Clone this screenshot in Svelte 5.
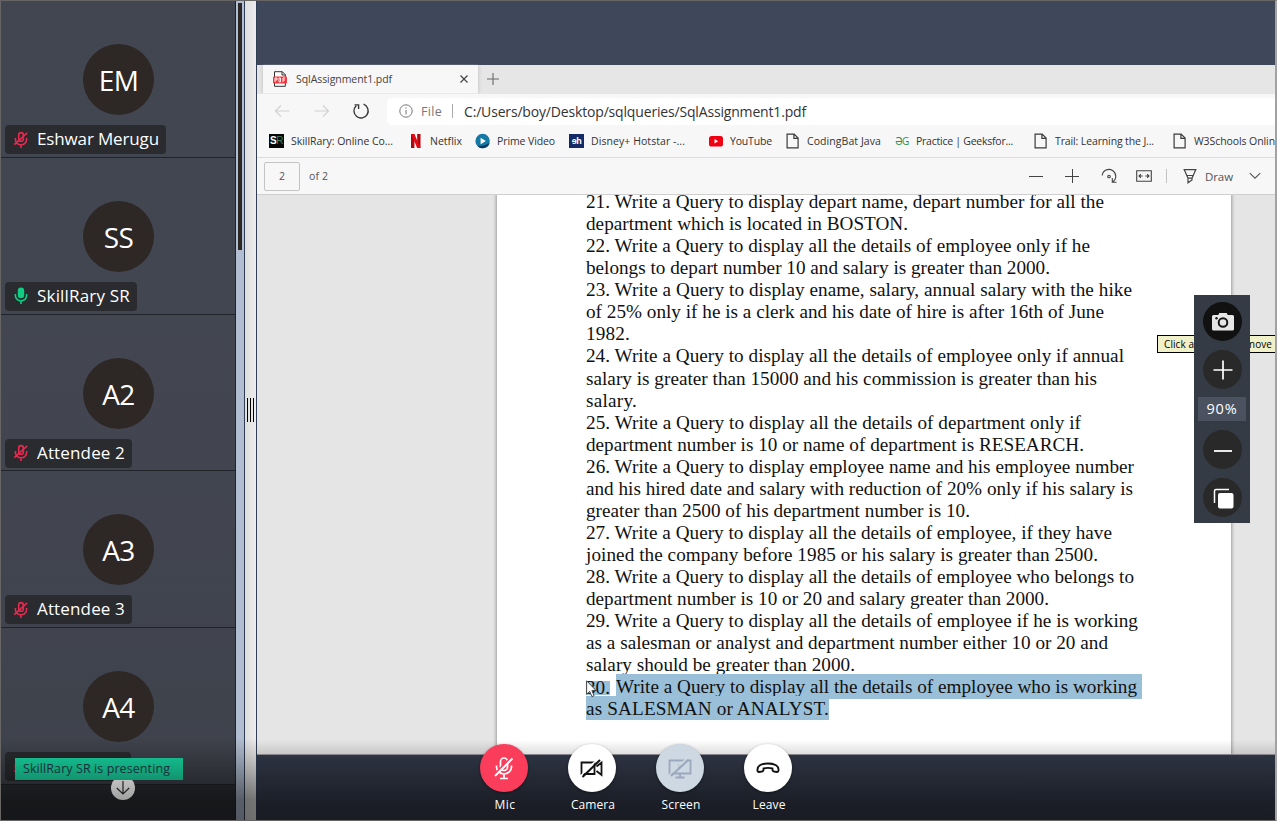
<script>
  // Spreads letter spacing so a run of text fills the given width.
  function fit(node, width) {
    const natural = node.getBoundingClientRect().width;
    node.style.letterSpacing = (width - natural) / node.textContent.length + 'px';
  }

  const people = [
    { initials: 'EM', name: 'Eshwar Merugu', width: 122, muted: true },
    { initials: 'SS', name: 'SkillRary SR', width: 93, muted: false },
    { initials: 'A2', name: 'Attendee 2', width: 88, muted: true },
    { initials: 'A3', name: 'Attendee 3', width: 88, muted: true },
    { initials: 'A4', name: '', width: 88, muted: true },
  ];

  const bookmarks = [
    { icon: 'sr', text: 'SkillRary: Online Co...', width: 102 },
    { icon: 'netflix', text: 'Netflix', width: 32 },
    { icon: 'prime', text: 'Prime Video', width: 58 },
    { icon: 'hotstar', text: 'Disney+ Hotstar -...', width: 94 },
    { icon: 'youtube', text: 'YouTube', width: 42 },
    { icon: 'page', text: 'CodingBat Java', width: 74 },
    { icon: 'gfg', text: 'Practice | Geeksfor...', width: 97 },
    { icon: 'page', text: 'Trail: Learning the J...', width: 99 },
    { icon: 'page', text: 'W3Schools Onlin', width: 81 },
  ];

  const lines = [
    ['21. Write a Query to display depart name, depart number for all the', 518],
    ['department which is located in BOSTON.', 322],
    ['22. Write a Query to display all the details of employee only if he', 504],
    ['belongs to depart number 10 and salary is greater than 2000.', 464],
    ['23. Write a Query to display ename, salary, annual salary with the hike', 546],
    ['of 25% only if he is a clerk and his date of hire is after 16th of June', 518],
    ['1982.', 44],
    ['24. Write a Query to display all the details of employee only if annual', 538],
    ['salary is greater than 15000 and his commission is greater than his', 511],
    ['salary.', 51],
    ['25. Write a Query to display all the details of department only if', 495],
    ['department number is 10 or name of department is RESEARCH.', 498],
    ['26. Write a Query to display employee name and his employee number', 548],
    ['and his hired date and salary with reduction of 20% only if his salary is', 547],
    ['greater than 2500 of his department number is 10.', 384],
    ['27. Write a Query to display all the details of employee, if they have', 526],
    ['joined the company before 1985 or his salary is greater than 2500.', 512],
    ['28. Write a Query to display all the details of employee who belongs to', 548],
    ['department number is 10 or 20 and salary greater than 2000.', 463],
    ['29. Write a Query to display all the details of employee if he is working', 552],
    ['as a salesman or analyst and department number either 10 or 20 and', 522],
    ['salary should be greater than 2000.', 269],
  ];
</script>

{#snippet smallMic(muted)}
  <svg class="smic" width="16" height="18" viewBox="0 0 16 18" fill="none" stroke={muted ? '#e8294f' : '#0fce83'} stroke-width="1.6">
    {#if muted}
      <rect x="5.7" y="1.6" width="4.6" height="8.6" rx="2.3" />
      <path d="M2.4 7v1.8a5.6 5 0 0 0 11.2 0V7M8 14v3M1.2 13.6 14.2 1.8" />
    {:else}
      <rect x="5.6" y="1.4" width="4.8" height="9" rx="2.4" fill="#0fce83" />
      <path d="M2.4 7v1.8a5.6 5 0 0 0 11.2 0V7M8 14v3" />
    {/if}
  </svg>
{/snippet}

{#snippet bookmarkIcon(kind)}
  {#if kind === 'sr'}
    <span class="tile-icon sr"><b>S</b>R</span>
  {:else if kind === 'netflix'}
    <svg width="16" height="16" viewBox="0 0 16 16"><path d="M3 1h3.4v14H3zM9.2 1h3.3v14H9.2z" fill="#b1060f" /><path d="M3 1h3.4l6.1 14H9.2z" fill="#e50914" /></svg>
  {:else if kind === 'prime'}
    <svg width="16" height="16" viewBox="0 0 16 16"><circle cx="7.6" cy="8" r="7.2" fill="#1579a5" /><path d="M2 12.5A7.2 7.2 0 0 0 14.6 10Q8 14 2 12.5Z" fill="#0a3c62" /><path d="M5.6 4.8 10.8 8l-5.2 3.2z" fill="#fff" /></svg>
  {:else if kind === 'hotstar'}
    <span class="tile-icon hot">ɘh</span>
  {:else if kind === 'youtube'}
    <svg width="16" height="16" viewBox="0 0 16 16"><rect x="1" y="3" width="14" height="10.5" rx="2.6" fill="#f00010" /><path d="M6.5 6 10.2 8.2 6.5 10.4z" fill="#fff" /></svg>
  {:else if kind === 'gfg'}
    <span class="gfg">ƏG</span>
  {:else}
    <svg width="16" height="16" viewBox="0 0 16 16" fill="none" stroke="#3b3b3b" stroke-width="1.2"><path d="M2.1 1.1h7l4 4v9.8h-11zM8.900 1.1v4.200h4.200" /></svg>
  {/if}
{/snippet}

<div class="app">
  <aside>
    <div class="people">
      {#each people as p}
        <section class="person">
          <div class="avatar">{p.initials}</div>
          <div class="label">{@render smallMic(p.muted)}{#if p.name}<span use:fit={p.width}>{p.name}</span>{:else}<span class="blank"></span>{/if}</div>
        </section>
      {/each}
      <div class="rest"></div>
    </div>
    <div class="track"><div class="thumb"></div></div>
    <div class="splitter"><i></i><i></i><i></i></div>
    <div class="shade"></div>
    <div class="down">
      <svg width="24" height="24" viewBox="0 0 24 24" fill="none" stroke="#202020" stroke-width="1.2"><path d="M12 5v13M5.800 12l6.200 6 6.200-6" /></svg>
    </div>
    <div class="presenting"><span use:fit={147}>SkillRary SR is presenting</span></div>
  </aside>

  <main>
    <div class="stage"></div>
    <div class="tabs">
      <div class="tab">
        <svg width="14" height="16" viewBox="0 0 14 16"><path d="M1.500.7h7.800l3 3v11.600H1.500z" fill="#fff" stroke="#333" /><path d="M9 .7v3.300h3.300" fill="none" stroke="#333" /><rect x="0" y="5.500" width="14" height="7" rx="1" fill="#f0383e" /><path d="M2 11V7h2v2H2M6 7v4h1.500V7zM10 11V7h2.300M10 9h2" fill="none" stroke="#fff" stroke-width=".9" /></svg>
        <span class="title"><span use:fit={96}>SqlAssignment1.pdf</span></span>
        <svg width="10" height="10" viewBox="0 0 10 10" stroke="#444" stroke-width="1.2"><path d="m1.500 1.500 7 7m0-7-7 7" /></svg>
      </div>
      <svg class="newtab" width="12" height="12" viewBox="0 0 12 12" stroke="#666" stroke-width="1.1"><path d="M6 0v12M0 6h12" /></svg>
    </div>
    <div class="address">
      <svg class="back" width="16" height="14" viewBox="0 0 16 14" fill="none" stroke="#d2d2d2" stroke-width="1.2"><path d="M15.500 7H1.500M7 1.500 1.500 7 7 12.500" /></svg>
      <svg class="fwd" width="16" height="14" viewBox="0 0 16 14" fill="none" stroke="#d2d2d2" stroke-width="1.2"><path d="M.5 7h14M9 1.500 14.500 7 9 12.500" /></svg>
      <svg class="reload" width="18" height="18" viewBox="0 0 18 18" fill="none" stroke="#3a3a3a" stroke-width="1.4"><path d="M11.500 2.200A7.100 7.100 0 1 1 4.200 3.700M2.600 2.900h4v4" /></svg>
      <div class="url">
        <svg width="14" height="14" viewBox="0 0 14 14" fill="none" stroke="#777"><circle cx="7" cy="7" r="6.200" /><path d="M7 6v4.500M7 3.400v1.300" /></svg>
        <span class="file"><span use:fit={21}>File</span></span>
        <i></i>
        <span class="path" use:fit={342}>C:/Users/boy/Desktop/sqlqueries/SqlAssignment1.pdf</span>
      </div>
    </div>
    <div class="bookmarks">
      {#each bookmarks as b}
        <div class="bm">{@render bookmarkIcon(b.icon)}<span use:fit={b.width}>{b.text}</span></div>
      {/each}
    </div>
    <div class="tools">
      <div class="num">2</div>
      <span class="of"><span use:fit={19}>of 2</span></span>
      <div class="right">
        <svg width="14" height="14" viewBox="0 0 14 14" stroke="#444" stroke-width="1"><path d="M0 7.500h14" /></svg>
        <svg width="14" height="14" viewBox="0 0 14 14" stroke="#444" stroke-width="1"><path d="M0 7.500h14M7.500 0v14" /></svg>
        <svg width="17" height="17" viewBox="0 0 17 17" fill="none" stroke="#444" stroke-width="1.1"><path d="M1.200 7.500A6.800 6.800 0 1 1 11.500 14M11.300 10v4.300h4.200" /><circle cx="8" cy="8.500" r="1.300" /></svg>
        <svg width="16" height="14" viewBox="0 0 16 14" fill="none" stroke="#444" stroke-width="1.1"><path d="M.7 1.700h14.600v10.600H.7zM2.800 7h4M9.200 7h4M4.800 5.200 3 7l1.800 1.800M11.200 5.200 13 7l-1.800 1.800" /></svg>
        <i></i>
        <svg width="14" height="16" viewBox="0 0 14 16" fill="none" stroke="#444" stroke-width="1.2"><path d="M.5 1.700h13M1.300 1.700 5 10.200v4.600l4-2.800v-1.800L12.700 1.700M3.800 7.500h6.400M5 10.200h4" /></svg>
        <span class="draw"><span use:fit={28}>Draw</span></span>
        <svg width="12" height="8" viewBox="0 0 12 8" fill="none" stroke="#555" stroke-width="1.1"><path d="m.8 1.200 5.200 5 5.200-5" /></svg>
      </div>
    </div>
    <div class="viewer">
      <article>
        {#each lines as [text, width]}
          <p><span use:fit={width}>{text}</span></p>
        {/each}
        <p><span class="no"><span use:fit={24}>30.</span></span><span class="mark first"><span use:fit={521}>Write a Query to display all the details of employee who is working</span></span></p>
        <p><span class="mark"><span use:fit={243}>as SALESMAN or ANALYST.</span></span></p>
      </article>
      <div class="fade"></div>
      <svg class="cursor" width="11" height="18" viewBox="0 0 11 18"><path d="M.6.8v13.400l3.100-2.800 2.200 5.200 2.200-1-2.200-5h4.200z" fill="#fff" stroke="#333" stroke-width=".9" /></svg>
    </div>
    <div class="bottom"></div>
  </main>

  <div class="tooltip"><span use:fit={108}>Click and drag to move</span></div>

  <div class="zoom">
    <div class="round cam">
      <svg width="24" height="20" viewBox="0 0 24 20"><path d="M2.500 3h4.800l1-2h7.400l1 2h4.800a1.500 1.500 0 0 1 1.500 1.500v12.500a1.500 1.500 0 0 1-1.500 1.500h-19A1.500 1.500 0 0 1 1 17V4.500A1.500 1.500 0 0 1 2.500 3Z" fill="#e6e6e6" /><circle cx="12" cy="10.500" r="4.300" fill="none" stroke="#151515" stroke-width="2" /><circle cx="5.500" cy="6.300" r="1.200" fill="#151515" /></svg>
    </div>
    <div class="round"><svg width="20" height="20" viewBox="0 0 20 20" stroke="#fff" stroke-width="1.700"><path d="M10 .5v19M.5 10h19" /></svg></div>
    <div class="percent"><span use:fit={31}>90%</span></div>
    <div class="round"><svg width="20" height="20" viewBox="0 0 20 20" stroke="#fff" stroke-width="1.800"><path d="M1 11h18" /></svg></div>
    <div class="round"><svg width="22" height="22" viewBox="0 0 22 22"><path d="M2.500 16V4a1.500 1.500 0 0 1 1.500-1.500h13" fill="none" stroke="#fff" stroke-width="1.500" /><rect x="6" y="6" width="15.500" height="15.500" rx="2" fill="#fff" /></svg></div>
  </div>

  <nav>
    <div class="ctl">
      <div class="btn mic"><svg width="24" height="26" viewBox="0 0 24 26" fill="none" stroke="#fff" stroke-width="1.700"><rect x="8.500" y="3" width="7" height="12.500" rx="3.500" /><path d="M4.500 10.500v1.500a7.500 7 0 0 0 15 0v-1.500M12 19v4M8 23.500h8" /><path d="M1.800 19.800 19.300 2.300" stroke="#f93d5b" stroke-width="1.700" /><path d="M3 21 20.500 3.500" stroke-width="2" /></svg></div>
      <span use:fit={21}>Mic</span>
    </div>
    <div class="ctl">
      <div class="btn"><svg width="26" height="22" viewBox="0 0 26 22" fill="none" stroke="#111" stroke-width="1.800"><path d="M2.500 5.500h13v11.500h-13zM17.500 9.500l5-4v12.500l-5-4" /><path d="M1.800 18.800 18.800 1.800" stroke="#fff" stroke-width="1.600" /><path d="M3.500 20 21 3" stroke-width="2" /></svg></div>
      <span use:fit={44}>Camera</span>
    </div>
    <div class="ctl">
      <div class="btn off"><svg width="26" height="24" viewBox="0 0 26 24" fill="none" stroke="#9aa8bd" stroke-width="1.800"><path d="M2.500 4.500h21v13h-21zM13 17.500V21M8.500 21.500h9" /><path d="m11 8 4.500 2.500-4.500 3z" fill="#9aa8bd" stroke="none" /><path d="M2.500 18.500 20 2.300" stroke="#ced8e3" stroke-width="1.600" /><path d="M4 20 21.500 3.800" stroke-width="2" /></svg></div>
      <span use:fit={39}>Screen</span>
    </div>
    <div class="ctl">
      <div class="btn"><svg width="24" height="14" viewBox="0 0 24 14" fill="none" stroke="#111" stroke-width="1.900" stroke-linejoin="round"><path d="M1.500 9.500C1 5 5 2.500 12 2.500S23 5 22.500 9.500c0 1-.5 1.500-1.500 1.500l-3-.5c-1-.2-1.500-.7-1.500-1.500V7.500c-3-.8-6-.8-9 0V9c0 .8-.5 1.300-1.500 1.500L3 11c-1 0-1.500-.5-1.500-1.500Z" /></svg></div>
      <span use:fit={33}>Leave</span>
    </div>
  </nav>
</div>

<style>
  :global(body) { margin: 0; overflow: hidden; }
  .app { position: relative; display: flex; box-sizing: border-box; width: 1277px; height: 821px; overflow: hidden; background: #3f475a; border: 1px solid #676665; border-right: 2px solid #a2a2a2; font-family: "Open Sans", "Noto Sans", sans-serif; }
  .app * { box-sizing: border-box; }
  span { white-space: nowrap; }
  span > span, .label span, .bm > span, .presenting span, .percent span, .tooltip span, .path, p span { display: inline-block; }
  svg { display: block; flex: none; }

  aside { position: relative; display: flex; width: 256px; flex: none; }
  .people { width: 234px; background: linear-gradient(#424650, #434651 45%, #3e424b); display: flex; flex-direction: column; }
  .person { height: 156.750px; flex: none; border-bottom: 1px solid #202329; padding: 43px 0 0 4px; }
  .avatar { width: 71px; height: 71px; margin-left: 78px; border-radius: 50%; background: #2d2725; color: #fff; font-size: 28px; line-height: 73px; text-align: center; letter-spacing: -.5px; }
  .label { display: inline-flex; align-items: center; gap: 8px; height: 29px; margin-top: 10px; padding: 0 7px 0 8px; border-radius: 4px; background: #292b2e; color: #fff; font-size: 17px; line-height: 27px; font-weight: 500; }
  .label span { height: 29px; }
  .blank { width: 87px; }
  .rest { flex: 1; background: #2e3035; }
  .track { width: 10px; background: #b1bdd0; border-left: 1px solid #202329; border-right: 1px solid #2f3d55; padding: 2px 0 0 2px; }
  .thumb { width: 4px; height: 247px; background: #2d2725; }
  .splitter { width: 12px; background: linear-gradient(90deg, #dedede, #ececec); border-right: 1px solid #2f3d55; display: flex; gap: 2px; align-items: center; justify-content: center; padding-bottom: 2px; }
  .splitter i { width: 1px; height: 24px; background: #000; }
  .shade { position: absolute; inset: auto 0 0 0; height: 82px; background: linear-gradient(rgba(0, 0, 0, 0), rgba(0, 0, 0, .5) 75%, rgba(0, 0, 0, .52)); }
  .down { position: absolute; left: 109.500px; top: 775px; width: 24px; height: 24px; border-radius: 50%; background: linear-gradient(#c8c8c8, #a0a0a0); }
  .presenting { position: absolute; left: 14px; top: 757px; width: 168px; height: 22px; padding-left: 8px; background: linear-gradient(#14b98b, #12946f); color: #17303a; font-size: 12.500px; line-height: 21px; }

  main { flex: 1; min-width: 0; display: flex; flex-direction: column; background: #f7f7f7; color: #444; overflow: hidden; }
  .stage { height: 64px; background: #3f475a; flex: none; }
  .tabs { height: 29px; flex: none; background: #e6e6e6; display: flex; align-items: center; padding: 0 0 1px 6px; }
  .tab { width: 215px; height: 29px; display: flex; align-items: center; padding: 0 9px 0 10px; background: #f7f7f7; box-shadow: 0 0 4px #bbb; clip-path: inset(0 -5px); }
  .title { flex: 1; padding-left: 9px; font-size: 10.500px; }
  .newtab { margin-left: 9px; }
  .address { height: 34px; flex: none; display: flex; align-items: center; background: #f7f7f7; }
  .back { margin-left: 17px; }
  .fwd { margin-left: 24px; }
  .reload { margin-left: 22px; }
  .url { flex: 1; height: 27px; margin-left: 17px; padding-left: 12px; background: #fff; border-radius: 5px 0 0 5px; display: flex; align-items: center; font-size: 14px; }
  .file { margin-left: 8px; font-size: 12.500px; color: #777; }
  .url i { width: 1px; height: 14px; background: #aaa; margin: 0 11px 0 10px; }
  .path { color: #333; }
  .bookmarks { height: 30px; flex: none; display: grid; grid-template-columns: 139px 67px 94px 139px 77px 109px 139px 139px 1fr; padding: 0 0 4px 12px; align-items: center; border-bottom: 1px solid #dcdcdc; font-size: 10.500px; color: #333; overflow: hidden; }
  .bm { display: flex; align-items: center; gap: 6px; min-width: 0; }
  .tile-icon { width: 15px; height: 14px; margin-right: 1px; color: #3c8062; background: #050807; font: 10px/14px "Liberation Sans", sans-serif; text-align: center; letter-spacing: -.5px; }
  .tile-icon b { color: #fff; }
  .tile-icon.hot { background: #142a67; color: #fff; font-size: 9px; font-weight: 700; }
  .gfg { width: 16px; color: #2f8d46; font-size: 10px; letter-spacing: -.5px; text-align: center; }
  .tools { height: 37px; flex: none; display: flex; align-items: center; padding: 0 14px 0 7px; border-bottom: 1px solid #cfcfcf; font-size: 10.500px; color: #555; }
  .num { width: 36px; height: 29px; border: 1px solid #c4c4c4; border-radius: 2px; line-height: 27px; text-align: center; }
  .of { margin-left: 9px; }
  .right { margin-left: auto; display: flex; align-items: center; }
  .right svg:nth-child(2) { margin-left: 22px; }
  .right svg:nth-child(3) { margin-left: 22px; }
  .right svg:nth-child(4) { margin-left: 18px; }
  .right i { width: 1px; height: 14px; background: #c4c4c4; margin: 0 16px 0 14px; }
  .draw { margin: 0 16px 0 8px; font-size: 11.500px; }
  .viewer { position: relative; height: 560px; flex: none; overflow: hidden; background: #e5e5e5; }
  article { width: 734px; height: 560px; margin-left: 240px; padding-left: 89px; background: #fff; box-shadow: 0 0 3px 1px #9a9a9a; color: #111; font: 19.200px/22.070px "Liberation Serif", serif; }
  p { margin: 0; height: 22.070px; white-space: nowrap; display: flex; position: relative; top: -4px; }
  .no { width: 30px; }
  .no > span { background: #9abfd8; height: 14px; line-height: 14px; margin-top: 5px; }
  .mark { background: #9abfd8; height: 24px; margin-top: -2px; padding-top: 2px; }
  .mark.first { width: 526px; height: 25px; }
  .fade { position: absolute; inset: auto 0 0 0; height: 15px; background: linear-gradient(rgba(0, 0, 0, 0), rgba(0, 0, 0, .13)); border-bottom: 1px solid #88868a; }
  .cursor { position: absolute; left: 329px; top: 485px; }
  .bottom { flex: 1; background: linear-gradient(#2c3341, #1b1e27 75%, #1a1c24); }

  .tooltip { position: absolute; left: 1156px; top: 334px; width: 120px; height: 18px; padding-left: 6px; border: 1px solid #000; background: #f1f1c9; color: #000; font-size: 10px; line-height: 17px; }
  .zoom { position: absolute; left: 1193px; top: 294px; width: 56px; height: 228px; background: #343b44; display: flex; flex-direction: column; align-items: center; padding-top: 7px; }
  .round { width: 39px; height: 39px; border-radius: 50%; background: #292929; display: flex; align-items: center; justify-content: center; margin-bottom: 9px; flex: none; padding-left: 1px; }
  .cam { background: #111; }
  .percent { width: 48px; height: 24px; flex: none; margin: -1px 0 9px; background: #4a525f; color: #fff; font-size: 14.500px; line-height: 24px; text-align: center; }
  nav { position: absolute; left: 460px; top: 743px; display: flex; }
  .ctl { width: 88px; display: flex; flex-direction: column; align-items: center; color: #fff; font-size: 12px; line-height: 17px; }
  .btn { width: 48px; height: 48px; border-radius: 50%; background: #fff; display: flex; align-items: center; justify-content: center; margin: 0 2px 4px 0; box-shadow: 0 1px 3px rgba(0, 0, 0, .4); }
  .mic { background: #f93d5b; }
  .off { background: #ced8e3; }
</style>
